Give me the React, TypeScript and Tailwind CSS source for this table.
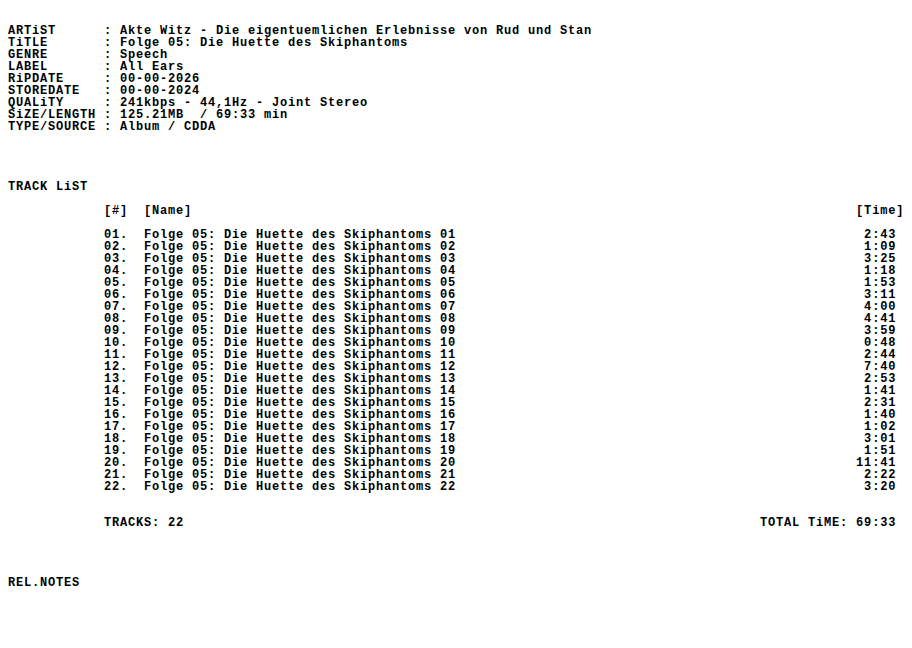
import React from "react";

const info: [string, string][] = [
  ["ARTiST", "Akte Witz - Die eigentuemlichen Erlebnisse von Rud und Stan"],
  ["TiTLE", "Folge 05: Die Huette des Skiphantoms"],
  ["GENRE", "Speech"],
  ["LABEL", "All Ears"],
  ["RiPDATE", "00-00-2026"],
  ["STOREDATE", "00-00-2024"],
  ["QUALiTY", "241kbps - 44,1Hz - Joint Stereo"],
  ["SiZE/LENGTH", "125.21MB  / 69:33 min"],
  ["TYPE/SOURCE", "Album / CDDA"],
];

const times = [
  "2:43", "1:09", "3:25", "1:18", "1:53", "3:11", "4:00", "4:41", "3:59", "0:48", "2:44",
  "7:40", "2:53", "1:41", "2:31", "1:40", "1:02", "3:01", "1:51", "11:41", "2:22", "3:20",
];

const indent = " ".repeat(12);

const Line = ({ text = "" }: { text?: string }) => (
  <div className="h-[12px] leading-[12px] whitespace-pre">{text || " "}</div>
);

const Blank = ({ n }: { n: number }) => (
  <>
    {Array.from({ length: n }).map((_, i) => (
      <Line key={i} />
    ))}
  </>
);

export default function App() {
  return (
    <div
      className="min-h-screen bg-white text-black pl-2 pt-[25px] font-bold text-[12px] tracking-[0.8px]"
      style={{ fontFamily: '"Liberation Mono", "DejaVu Sans Mono", monospace' }}
    >
      {info.map(([k, v]) => (
        <Line key={k} text={`${k.padEnd(12)}: ${v}`} />
      ))}
      <Blank n={4} />
      <Line text="TRACK LiST" />
      <Blank n={1} />
      <Line text={`${indent}[#]  [Name]`.padEnd(106) + "[Time]"} />
      <Blank n={1} />
      {times.map((t, i) => {
        const no = String(i + 1).padStart(2, "0");
        const left = `${indent}${no}.  Folge 05: Die Huette des Skiphantoms ${no}`;
        return <Line key={no} text={left.padEnd(111 - t.length) + t} />;
      })}
      <Blank n={2} />
      <Line text={`${indent}TRACKS: 22`.padEnd(94) + "TOTAL TiME: 69:33"} />
      <Blank n={4} />
      <Line text="REL.NOTES" />
    </div>
  );
}
